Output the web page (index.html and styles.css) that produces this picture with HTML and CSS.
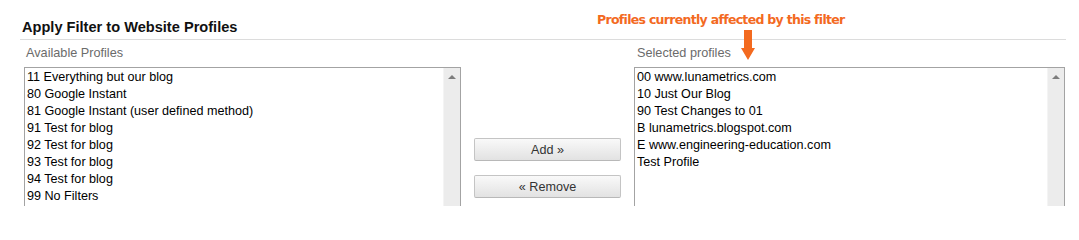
FILE: index.html
```html
<!DOCTYPE html>
<html>
<head>
<meta charset="utf-8">
<link rel="stylesheet" href="styles.css">
</head>
<body>
<div class="page">
  <div class="callout">
    <span class="callout-text">Profiles currently affected by this filter</span>
    <svg class="callout-arrow" width="16" height="32" viewBox="0 0 16 32">
      <polygon points="4,0 12,0 12,18 15,18 8,30 1,18 4,18" fill="#f36a1f"/>
    </svg>
  </div>
  <h2 class="title">Apply Filter to Website Profiles</h2>
  <div class="pickers">
    <div class="col col-left">
      <div class="label">Available Profiles</div>
      <div class="listbox">
        <ul class="items">
          <li>11 Everything but our blog</li>
          <li>80 Google Instant</li>
          <li>81 Google Instant (user defined method)</li>
          <li>91 Test for blog</li>
          <li>92 Test for blog</li>
          <li>93 Test for blog</li>
          <li>94 Test for blog</li>
          <li>99 No Filters</li>
        </ul>
        <div class="scrollbar"><span class="up"></span></div>
      </div>
    </div>
    <div class="col col-mid">
      <button class="btn">Add »</button>
      <button class="btn">« Remove</button>
    </div>
    <div class="col col-right">
      <div class="label">Selected profiles</div>
      <div class="listbox">
        <ul class="items">
          <li>00 www.lunametrics.com</li>
          <li>10 Just Our Blog</li>
          <li>90 Test Changes to 01</li>
          <li>B lunametrics.blogspot.com</li>
          <li>E www.engineering-education.com</li>
          <li>Test Profile</li>
        </ul>
        <div class="scrollbar"><span class="up"></span></div>
      </div>
    </div>
  </div>
</div>
</body>
</html>
```

FILE: styles.css
```css
html, body {
  margin: 0;
  padding: 0;
  background: #ffffff;
  overflow: hidden;
}
.page {
  position: relative;
  width: 1079px;
  height: 206px;
  overflow: hidden;
  font-family: "Liberation Sans", Arial, sans-serif;
}
.callout {
  position: absolute;
  left: 597px;
  top: 12px;
  width: 260px;
  height: 60px;
}
.callout-text {
  display: block;
  font-family: "DejaVu Sans", sans-serif;
  font-weight: bold;
  font-size: 12.5px;
  line-height: 16px;
  letter-spacing: -0.7px;
  color: #f36a1f;
  white-space: nowrap;
}
.callout-arrow {
  position: absolute;
  left: 143px;
  top: 18px;
}
.title {
  margin: 0 13px 0 20px;
  padding: 19px 0 4px 2px;
  font-size: 14.6px;
  line-height: 16px;
  font-weight: bold;
  color: #111;
  border-bottom: 1px solid #dcdcdc;
}
.pickers {
  display: flex;
  padding-left: 24px;
}
.col-left {
  width: 437px;
}
.col-right {
  width: 431px;
}
.col-mid {
  width: 173px;
  display: flex;
  flex-direction: column;
  align-items: center;
  gap: 14px;
  padding-top: 98px;
}
.label {
  margin: 6px 0 7px 2px;
  font-size: 12.7px;
  line-height: 14px;
  color: #6b6b6b;
}
.col-right .label {
  margin-left: 3px;
}
.listbox {
  position: relative;
  height: 150px;
  border: 1px solid #a3a3a3;
  display: flex;
  overflow: hidden;
}
.items {
  flex: 1;
  list-style: none;
  margin: 0;
  padding: 1px 0 0 2px;
  font-size: 12.6px;
  line-height: 17px;
  color: #000;
}
.scrollbar {
  width: 16px;
  background: #ececec;
  border-left: 1px solid #f4f4f4;
  display: flex;
  justify-content: center;
}
.up {
  width: 0;
  height: 0;
  margin-top: 7px;
  border-left: 4px solid transparent;
  border-right: 4px solid transparent;
  border-bottom: 4px solid #7d7d7d;
}
.btn {
  width: 147px;
  height: 23px;
  margin: 0;
  padding: 0;
  border: 1px solid #c4c4c4;
  border-bottom-color: #b8b8b8;
  border-radius: 2px;
  background: linear-gradient(#f9f9f9, #e2e2e2);
  font-family: "Liberation Sans", Arial, sans-serif;
  font-size: 12.6px;
  color: #333;
}
```
